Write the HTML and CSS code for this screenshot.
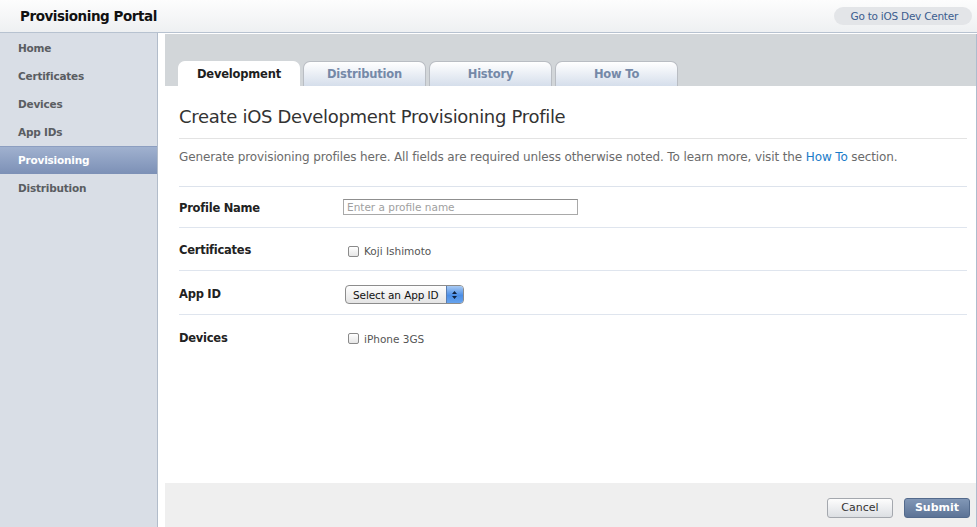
FILE: index.html
```html
<!DOCTYPE html>
<html>
<head>
<meta charset="utf-8">
<link rel="stylesheet" href="styles.css">
</head>
<body>
<header class="topbar">
  <h1 class="portal-title">Provisioning Portal</h1>
  <a class="devcenter" href="#">Go to iOS Dev Center</a>
</header>
<div class="layout">
  <nav class="sidebar">
    <a class="nav-item" href="#">Home</a>
    <a class="nav-item" href="#">Certificates</a>
    <a class="nav-item" href="#">Devices</a>
    <a class="nav-item" href="#">App IDs</a>
    <a class="nav-item active" href="#">Provisioning</a>
    <a class="nav-item" href="#">Distribution</a>
  </nav>
  <main class="main">
    <div class="tabbar">
      <a class="tab active" href="#">Development</a>
      <a class="tab" href="#">Distribution</a>
      <a class="tab" href="#">History</a>
      <a class="tab" href="#">How To</a>
    </div>
    <section class="content">
      <h2 class="page-title">Create iOS Development Provisioning Profile</h2>
      <p class="intro">Generate provisioning profiles here. All fields are required unless otherwise noted. To learn more, visit the <a href="#" class="link">How To</a> section.</p>
      <div class="form">
        <div class="row first">
          <div class="label">Profile Name</div>
          <div class="field"><input class="text-input" type="text" placeholder="Enter a profile name"></div>
        </div>
        <div class="row">
          <div class="label">Certificates</div>
          <div class="field"><label class="check"><span class="box"></span>Koji Ishimoto</label></div>
        </div>
        <div class="row tall">
          <div class="label">App ID</div>
          <div class="field"><span class="select">Select an App ID<span class="arrows"><svg width="7" height="10" viewBox="0 0 7 10"><path d="M3.5 1 L6 4 H1 Z M3.5 9 L6 6 H1 Z"/></svg></span></span></div>
        </div>
        <div class="row last">
          <div class="label">Devices</div>
          <div class="field"><label class="check"><span class="box"></span>iPhone 3GS</label></div>
        </div>
      </div>
    </section>
    <footer class="actions">
      <button class="btn cancel">Cancel</button>
      <button class="btn submit">Submit</button>
    </footer>
  </main>
</div>
</body>
</html>
```
FILE: styles.css
```css
* { box-sizing: border-box; }
html, body { margin: 0; padding: 0; height: 100%; }
body {
  font-family: "DejaVu Sans", "Lucida Grande", sans-serif;
  background: #fff;
  color: #333;
  width: 977px;
  height: 527px;
  overflow: hidden;
  display: flex;
  flex-direction: column;
}
a { text-decoration: none; }
.topbar {
  height: 33px;
  flex: none;
  display: flex;
  align-items: center;
  justify-content: space-between;
  padding: 0 5px 0 20px;
  background: linear-gradient(#fdfdfd, #eef0f2);
  border-bottom: 1px solid #b7c2d0;
}
.portal-title {
  margin: 0;
  font-size: 13.5px;
  font-weight: bold;
  color: #111;
  letter-spacing: -0.45px;
}
.devcenter {
  display: block;
  height: 18px;
  line-height: 18px;
  padding: 0 14px 0 17px;
  border-radius: 9px;
  background: #e3e5e8;
  color: #3b5d8f;
  font-size: 10.5px;
  letter-spacing: -0.25px;
}
.layout {
  flex: 1;
  display: flex;
  min-height: 0;
}
.sidebar {
  width: 158px;
  flex: none;
  background: #d9dee6;
  border-right: 1px solid #b2bcca;
  padding-top: 1px;
  display: flex;
  flex-direction: column;
}
.nav-item {
  height: 28px;
  line-height: 28px;
  padding-left: 18px;
  font-size: 10.5px;
  font-weight: bold;
  color: #5a5d62;
  letter-spacing: -0.2px;
}
.nav-item.active {
  background: linear-gradient(#a0b1cf, #7c90b6);
  color: #fff;
  border-top: 1px solid #8c9ec0;
  line-height: 26px;
}
.main {
  flex: 1;
  margin-left: 7px;
  border-right: 1px solid #aebccd;
  display: flex;
  flex-direction: column;
  margin-top: 1px;
}
.tabbar {
  height: 52px;
  flex: none;
  background: #d2d6d9;
  display: flex;
  align-items: flex-end;
  padding-left: 13px;
  gap: 3px;
}
.tab {
  width: 123px;
  height: 25px;
  line-height: 24px;
  text-align: center;
  font-size: 11.5px;
  font-weight: bold;
  color: #7589a8;
  letter-spacing: -0.2px;
  background: linear-gradient(#ffffff, #d5deeb);
  border: 1px solid #b9bdc3;
  border-bottom: none;
  border-radius: 7px 7px 0 0;
}
.tab.active {
  background: #fff;
  color: #1e1e1e;
  border-color: #fff;
  width: 122px;
}
.content {
  flex: 1;
  padding: 0 9px 0 14px;
  background: #fff;
}
.page-title {
  margin: 0;
  height: 53px;
  line-height: 62px;
  font-size: 18px;
  font-weight: normal;
  color: #333;
  letter-spacing: -0.3px;
  border-bottom: 1px solid #e3e3e3;
}
.intro {
  margin: 0;
  height: 48px;
  padding-top: 10px;
  font-size: 12px;
  line-height: 16px;
  color: #6b6b6b;
  letter-spacing: -0.12px;
  border-bottom: 1px solid #dde3ec;
}
.link { color: #1a7cc9; }
.form { display: flex; flex-direction: column; }
.row {
  height: 43px;
  display: flex;
  align-items: center;
  padding-top: 2px;
  border-bottom: 1px solid #dfe5ee;
}
.row.first { height: 41px; }
.row.tall { height: 44px; }
.row.last { border-bottom: none; }
.label {
  width: 164px;
  font-size: 11.5px;
  font-weight: bold;
  color: #222;
  letter-spacing: -0.25px;
}
.field { display: flex; align-items: center; }
.text-input {
  width: 235px;
  height: 16px;
  border: 1px solid #a9a9a9;
  border-top-color: #8f8f8f;
  padding: 0 3px;
  font-family: inherit;
  font-size: 10.5px;
  color: #333;
  margin-top: -2px;
  outline: none;
}
.text-input::placeholder { color: #a0a0a0; }
.check {
  display: flex;
  align-items: center;
  font-size: 10.5px;
  color: #555;
  padding-left: 5px;
  margin-top: 2px;
}
.box {
  width: 11px;
  height: 11px;
  border: 1px solid #8a8a8a;
  border-radius: 2px;
  background: linear-gradient(#fff, #e6e6e6);
  margin-right: 5px;
}
.select {
  display: flex;
  align-items: center;
  height: 19px;
  padding-left: 7px;
  border: 1px solid #8c8c8c;
  border-radius: 4px;
  background: linear-gradient(#fefefe, #e4e4e4);
  font-size: 10.5px;
  color: #111;
  margin-left: 2px;
  margin-top: 2px;
  overflow: hidden;
  letter-spacing: -0.1px;
}
.arrows {
  width: 17px;
  height: 19px;
  margin-left: 7px;
  background: linear-gradient(#b2d0f4, #4b8ee6 55%, #6aa6ee);
  border-left: 1px solid #5a7db0;
  display: flex;
  align-items: center;
  justify-content: center;
}
.arrows svg path { fill: #10223e; }
.actions {
  height: 44px;
  flex: none;
  background: #efefef;
  display: flex;
  justify-content: flex-end;
  align-items: center;
  padding-right: 6px;
  gap: 11px;
  padding-top: 5px;
}
.btn {
  width: 66px;
  height: 20px;
  border-radius: 3px;
  font-family: inherit;
  font-size: 11px;
  padding: 0;
}
.btn.cancel {
  background: linear-gradient(#fdfdfd, #dcdfe3);
  border: 1px solid #a4a8ae;
  color: #333;
}
.btn.submit {
  background: linear-gradient(#8197b6, #5c7396);
  border: 1px solid #536a8c;
  color: #fff;
  font-weight: bold;
}
```
